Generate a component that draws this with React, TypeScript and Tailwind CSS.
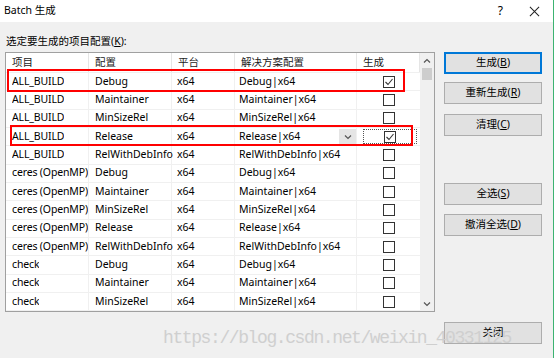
import React from "react"

interface Row {
  project: string
  config: string
  platform: string
  solution: string
  build: boolean
}

const rows: Row[] = [
  { project: "ALL_BUILD", config: "Debug", platform: "x64", solution: "Debug|x64", build: true },
  { project: "ALL_BUILD", config: "Maintainer", platform: "x64", solution: "Maintainer|x64", build: false },
  { project: "ALL_BUILD", config: "MinSizeRel", platform: "x64", solution: "MinSizeRel|x64", build: false },
  { project: "ALL_BUILD", config: "Release", platform: "x64", solution: "Release|x64", build: true },
  { project: "ALL_BUILD", config: "RelWithDebInfo", platform: "x64", solution: "RelWithDebInfo|x64", build: false },
  { project: "ceres (OpenMP)", config: "Debug", platform: "x64", solution: "Debug|x64", build: false },
  { project: "ceres (OpenMP)", config: "Maintainer", platform: "x64", solution: "Maintainer|x64", build: false },
  { project: "ceres (OpenMP)", config: "MinSizeRel", platform: "x64", solution: "MinSizeRel|x64", build: false },
  { project: "ceres (OpenMP)", config: "Release", platform: "x64", solution: "Release|x64", build: false },
  { project: "ceres (OpenMP)", config: "RelWithDebInfo", platform: "x64", solution: "RelWithDebInfo|x64", build: false },
  { project: "check", config: "Debug", platform: "x64", solution: "Debug|x64", build: false },
  { project: "check", config: "Maintainer", platform: "x64", solution: "Maintainer|x64", build: false },
  { project: "check", config: "MinSizeRel", platform: "x64", solution: "MinSizeRel|x64", build: false },
]

const cols = "grid grid-cols-[83px_83px_63px_122px_63px]"

function Checkbox({ checked }: { checked: boolean }) {
  return (
    <div className="w-[12px] h-[12px] border border-[#333333] bg-white flex items-center justify-center">
      {checked && (
        <svg width="10" height="10" viewBox="0 0 10 10">
          <path d="M1.5 5 L4 7.5 L8.5 2" fill="none" stroke="#333" strokeWidth="1.1" />
        </svg>
      )}
    </div>
  )
}

function Chevron({ down }: { down?: boolean }) {
  return (
    <svg width="8" height="6" viewBox="0 0 8 6">
      <path d={down ? "M1 1.5 L4 4.5 L7 1.5" : "M1 4.5 L4 1.5 L7 4.5"} fill="none" stroke="#555" strokeWidth="1.2" />
    </svg>
  )
}

function DialogButton({ label, hot, primary, className }: { label: string; hot: string; primary?: boolean; className?: string }) {
  return (
    <button
      className={`w-[98px] h-[22px] bg-[#e1e1e1] text-[10.5px] text-black flex items-center justify-center ${
        primary ? "border-2 border-[#0078d7]" : "border border-[#adadad]"
      } ${className ?? ""}`}
    >
      {label}(<span className="underline">{hot}</span>)
    </button>
  )
}

export default function App() {
  return (
    <div className="relative w-[554px] h-[358px] bg-[#f0f0f0] border-r border-[#3cb371] overflow-hidden text-black font-['Noto_Sans','Noto_Sans_CJK_SC',sans-serif]">
      {/* Title bar */}
      <div className="h-[22px] bg-white flex items-center pl-[4px] text-[10.5px]">
        <span>Batch 生成</span>
        <span className="ml-auto mr-[26px] text-[12px]">?</span>
        <svg width="11" height="11" viewBox="0 0 12 12" className="mr-[13px]">
          <path d="M1 1 L11 11 M11 1 L1 11" stroke="#222" strokeWidth="1.1" />
        </svg>
      </div>

      <div className="flex pl-[5px]">
        {/* Left side: label + table */}
        <div className="w-[430px]">
          <div className="h-[16px] mt-[11px] mb-[3px] pl-[1px] text-[10.5px] leading-[16px]">
            选定要生成的项目配置(<span className="underline">K</span>):
          </div>
          <div className="h-[260px] border border-[#a0a0a0] bg-white flex text-[10.5px]">
            <div className="w-[414px]">
              {/* header */}
              <div className={`${cols} h-[20px] border-b border-[#f0f0f0]`}>
                {["项目", "配置", "平台", "解决方案配置", "生成"].map((h) => (
                  <div key={h} className="pl-[6px] flex items-center border-r border-[#e5e5e5] text-[#1a1a1a]">
                    {h}
                  </div>
                ))}
              </div>
              {rows.map((r, i) => (
                <div key={i} className={`${cols} h-[18.33px] border-b border-[#f0f0f0]`}>
                  <div className="pl-[6px] flex items-center border-r border-[#f0f0f0] overflow-hidden">
                    <span className="truncate tracking-[-0.15px]">{r.project}</span>
                  </div>
                  <div className="pl-[6px] flex items-center border-r border-[#f0f0f0] whitespace-nowrap">{r.config}</div>
                  <div className="pl-[5px] flex items-center border-r border-[#f0f0f0]">{r.platform}</div>
                  <div className="pl-[4px] flex items-center border-r border-[#f0f0f0] whitespace-nowrap">
                    <span>{r.solution}</span>
                    {i === 3 && (
                      <span className="ml-auto w-[17px] h-[16px] bg-[#e5e5e5] flex items-center justify-center">
                        <Chevron down />
                      </span>
                    )}
                  </div>
                  <div className="flex items-center justify-center">
                    {i === 3 ? (
                      <div className="w-[54px] h-[15px] ml-[2px] border border-dotted border-[#555] flex items-center justify-center">
                        <Checkbox checked={r.build} />
                      </div>
                    ) : (
                      <Checkbox checked={r.build} />
                    )}
                  </div>
                </div>
              ))}
            </div>
            {/* scrollbar */}
            <div className="w-[14px] bg-[#f0f0f0] flex flex-col items-center">
              <div className="h-[14px] flex items-center justify-center mt-[1px]">
                <Chevron />
              </div>
              <div className="w-[10px] h-[12px] bg-[#cdcdcd]" />
              <div className="mt-auto mb-[4px]">
                <Chevron down />
              </div>
            </div>
          </div>
        </div>

        {/* Right side: buttons */}
        <div className="ml-[9px] flex flex-col pt-[30px]">
          <DialogButton label="生成" hot="B" primary />
          <DialogButton label="重新生成" hot="R" className="mt-[8px]" />
          <DialogButton label="清理" hot="C" className="mt-[10px]" />
          <DialogButton label="全选" hot="S" className="mt-[47px]" />
          <DialogButton label="撤消全选" hot="D" className="mt-[9px]" />
          <button className="mt-[86px] w-[98px] h-[22px] bg-[#e1e1e1] border border-[#adadad] text-[10.5px] text-black">
            关闭
          </button>
        </div>
      </div>

      {/* red annotation boxes */}
      <div className="absolute left-[7px] top-[69px] w-[398px] h-[23px] border-2 border-[#ff0000] pointer-events-none" />
      <div className="absolute left-[10px] top-[125px] w-[403px] h-[21px] border-2 border-[#ff0000] pointer-events-none" />

      {/* watermark */}
      <div className="absolute left-[163px] top-[326px] text-[18px] leading-[24px] tracking-[-1.4px] text-[#cfcfcf] font-['Liberation_Mono',monospace] whitespace-nowrap pointer-events-none">
        https://blog.csdn.net/weixin_40331125
      </div>
    </div>
  )
}
